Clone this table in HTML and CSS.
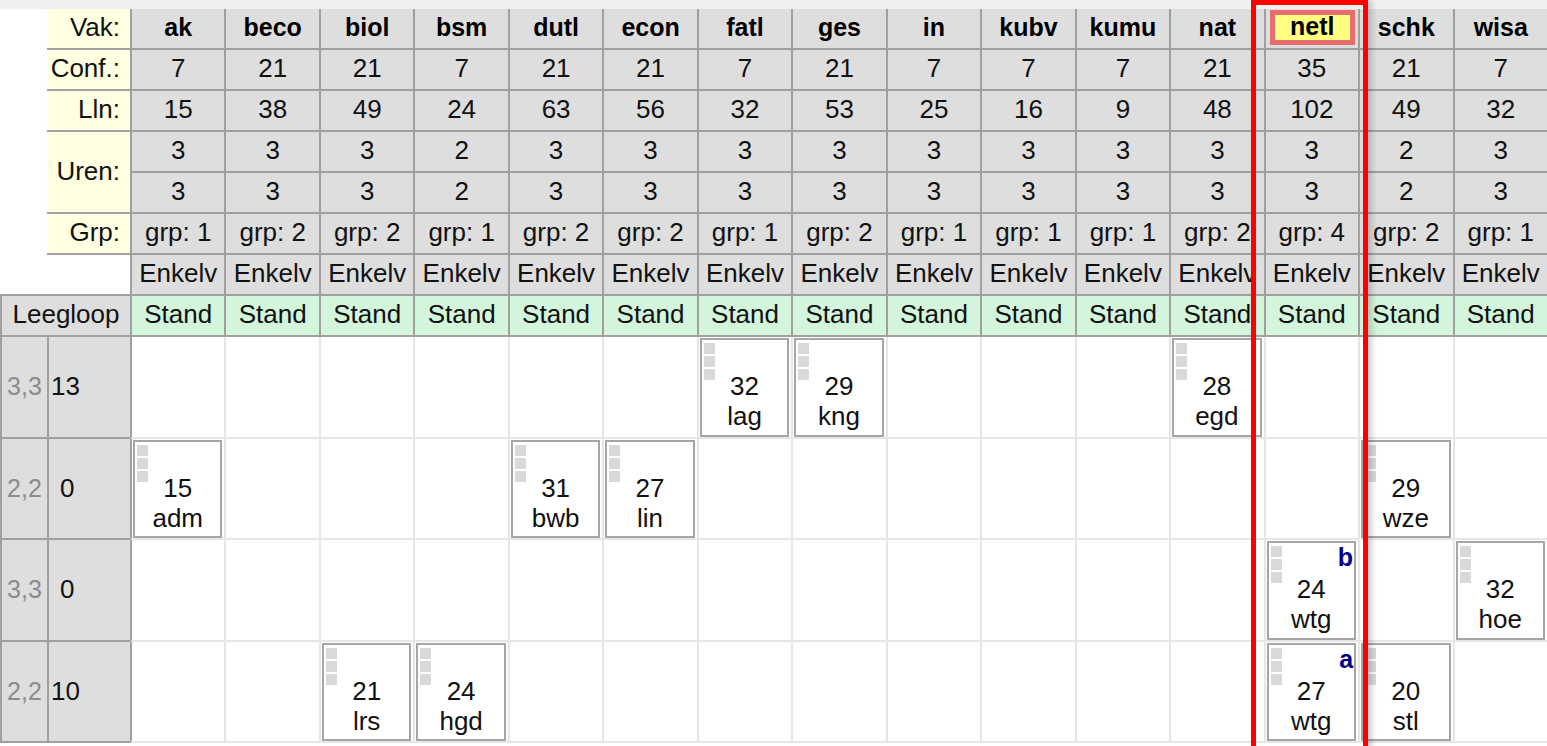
FILE: index.html
```html
<!DOCTYPE html>
<html>
<head>
<meta charset="utf-8">
<title>Vakken</title>
<link rel="stylesheet" href="styles.css">
</head>
<body>
<div class="view">
  <div class="grid">
    <div class="topbar"></div>

    <div class="blank-l"></div>
    <div class="lbl">Vak:</div>
    <div class="h vak first">ak</div><div class="h vak">beco</div><div class="h vak">biol</div><div class="h vak">bsm</div><div class="h vak">dutl</div><div class="h vak">econ</div><div class="h vak">fatl</div><div class="h vak">ges</div><div class="h vak">in</div><div class="h vak">kubv</div><div class="h vak">kumu</div><div class="h vak">nat</div><div class="h vak sel"><span class="sel-box">netl</span></div><div class="h vak">schk</div><div class="h vak">wisa</div>

    <div class="lbl">Conf.:</div>
    <div class="h first">7</div><div class="h">21</div><div class="h">21</div><div class="h">7</div><div class="h">21</div><div class="h">21</div><div class="h">7</div><div class="h">21</div><div class="h">7</div><div class="h">7</div><div class="h">7</div><div class="h">21</div><div class="h">35</div><div class="h">21</div><div class="h">7</div>

    <div class="lbl">Lln:</div>
    <div class="h first">15</div><div class="h">38</div><div class="h">49</div><div class="h">24</div><div class="h">63</div><div class="h">56</div><div class="h">32</div><div class="h">53</div><div class="h">25</div><div class="h">16</div><div class="h">9</div><div class="h">48</div><div class="h">102</div><div class="h">49</div><div class="h">32</div>

    <div class="lbl uren">Uren:</div>
    <div class="h first">3</div><div class="h">3</div><div class="h">3</div><div class="h">2</div><div class="h">3</div><div class="h">3</div><div class="h">3</div><div class="h">3</div><div class="h">3</div><div class="h">3</div><div class="h">3</div><div class="h">3</div><div class="h">3</div><div class="h">2</div><div class="h">3</div>
    <div class="h first">3</div><div class="h">3</div><div class="h">3</div><div class="h">2</div><div class="h">3</div><div class="h">3</div><div class="h">3</div><div class="h">3</div><div class="h">3</div><div class="h">3</div><div class="h">3</div><div class="h">3</div><div class="h">3</div><div class="h">2</div><div class="h">3</div>

    <div class="lbl">Grp:</div>
    <div class="h first">grp: 1</div><div class="h">grp: 2</div><div class="h">grp: 2</div><div class="h">grp: 1</div><div class="h">grp: 2</div><div class="h">grp: 2</div><div class="h">grp: 1</div><div class="h">grp: 2</div><div class="h">grp: 1</div><div class="h">grp: 1</div><div class="h">grp: 1</div><div class="h">grp: 2</div><div class="h">grp: 4</div><div class="h">grp: 2</div><div class="h">grp: 1</div>

    <div class="blank-e"></div>
    <div class="h first">Enkelv</div><div class="h">Enkelv</div><div class="h">Enkelv</div><div class="h">Enkelv</div><div class="h">Enkelv</div><div class="h">Enkelv</div><div class="h">Enkelv</div><div class="h">Enkelv</div><div class="h">Enkelv</div><div class="h">Enkelv</div><div class="h">Enkelv</div><div class="h">Enkelv</div><div class="h">Enkelv</div><div class="h">Enkelv</div><div class="h">Enkelv</div>

    <div class="leeg">Leegloop</div>
    <div class="h st first">Stand</div><div class="h st">Stand</div><div class="h st">Stand</div><div class="h st">Stand</div><div class="h st">Stand</div><div class="h st">Stand</div><div class="h st">Stand</div><div class="h st">Stand</div><div class="h st">Stand</div><div class="h st">Stand</div><div class="h st">Stand</div><div class="h st">Stand</div><div class="h st">Stand</div><div class="h st">Stand</div><div class="h st">Stand</div>

    <!-- body row 1 -->
    <div class="bl pct">3,3</div>
    <div class="bl num">13</div>
    <div class="c first"></div><div class="c"></div><div class="c"></div><div class="c"></div><div class="c"></div><div class="c"></div>
    <div class="c"><div class="card"><span class="sq"><i></i><i></i><i></i></span>32<br>lag</div></div>
    <div class="c"><div class="card"><span class="sq"><i></i><i></i><i></i></span>29<br>kng</div></div>
    <div class="c"></div><div class="c"></div><div class="c"></div>
    <div class="c"><div class="card"><span class="sq"><i></i><i></i><i></i></span>28<br>egd</div></div>
    <div class="c"></div><div class="c"></div><div class="c"></div>

    <!-- body row 2 -->
    <div class="bl pct">2,2</div>
    <div class="bl num ind">0</div>
    <div class="c first"><div class="card"><span class="sq"><i></i><i></i><i></i></span>15<br>adm</div></div>
    <div class="c"></div><div class="c"></div><div class="c"></div>
    <div class="c"><div class="card"><span class="sq"><i></i><i></i><i></i></span>31<br>bwb</div></div>
    <div class="c"><div class="card"><span class="sq"><i></i><i></i><i></i></span>27<br>lin</div></div>
    <div class="c"></div><div class="c"></div><div class="c"></div><div class="c"></div><div class="c"></div><div class="c"></div>
    <div class="c"></div>
    <div class="c"><div class="card"><span class="sq"><i></i><i></i><i></i></span>29<br>wze</div></div>
    <div class="c"></div>

    <!-- body row 3 -->
    <div class="bl pct">3,3</div>
    <div class="bl num ind">0</div>
    <div class="c first"></div><div class="c"></div><div class="c"></div><div class="c"></div><div class="c"></div><div class="c"></div><div class="c"></div><div class="c"></div><div class="c"></div><div class="c"></div><div class="c"></div><div class="c"></div>
    <div class="c"><div class="card"><span class="sq"><i></i><i></i><i></i></span><span class="tag">b</span>24<br>wtg</div></div>
    <div class="c"></div>
    <div class="c"><div class="card"><span class="sq"><i></i><i></i><i></i></span>32<br>hoe</div></div>

    <!-- body row 4 -->
    <div class="bl pct">2,2</div>
    <div class="bl num">10</div>
    <div class="c first"></div><div class="c"></div>
    <div class="c"><div class="card"><span class="sq"><i></i><i></i><i></i></span>21<br>lrs</div></div>
    <div class="c"><div class="card"><span class="sq"><i></i><i></i><i></i></span>24<br>hgd</div></div>
    <div class="c"></div><div class="c"></div><div class="c"></div><div class="c"></div><div class="c"></div><div class="c"></div><div class="c"></div><div class="c"></div>
    <div class="c"><div class="card"><span class="sq"><i></i><i></i><i></i></span><span class="tag">a</span>27<br>wtg</div></div>
    <div class="c"><div class="card"><span class="sq"><i></i><i></i><i></i></span>20<br>stl</div></div>
    <div class="c"></div>
  </div>
  <div class="hl"></div>
</div>
</body>
</html>
```

FILE: styles.css
```css
* { box-sizing: border-box; }
html, body { margin: 0; padding: 0; background: #ffffff; }
body {
  font-family: "Liberation Sans", Arial, sans-serif;
  font-size: 26px;
  color: #111111;
  overflow: hidden;
}
.view {
  position: relative;
  width: 1547px;
  height: 746px;
  overflow: hidden;
}
.grid {
  display: grid;
  grid-template-columns: 47px 83px repeat(15, 1fr);
  grid-template-rows: 9px repeat(8, 41px) repeat(4, 101.5px);
  width: 1547px;
}
.topbar {
  grid-column: 1 / -1;
  background: #f0f0f0;
}
.blank-l { grid-row: span 6; }
.blank-e {
  grid-column: span 2;
  border-bottom: 2px solid #a0a0a0;
}
.lbl {
  background: #ffffe1;
  border-bottom: 2px solid #a0a0a0;
  display: flex;
  align-items: center;
  justify-content: flex-end;
  padding: 0 10px 2px 0;
  white-space: nowrap;
}
.lbl.uren { grid-row: span 2; }
.h {
  background: #dedede;
  border-left: 2px solid #a0a0a0;
  border-bottom: 2px solid #a0a0a0;
  display: flex;
  align-items: center;
  justify-content: center;
  white-space: nowrap;
  overflow: hidden;
  padding-bottom: 2px;
}
.h.vak {
  font-weight: bold;
  font-size: 25px;
  color: #000;
}
.h.st { background: #d2f5dc; }
.h.sel {
  padding: 1px 3px 3px 4px;
  align-items: stretch;
}
.sel-box {
  flex: 1;
  display: flex;
  align-items: center;
  justify-content: center;
  background: #ffff80;
  border: 5px solid #e86e6e;
  padding-bottom: 2px;
}
.leeg {
  grid-column: span 2;
  background: #dedede;
  border-left: 2px solid #a0a0a0;
  border-bottom: 2px solid #a0a0a0;
  display: flex;
  align-items: center;
  justify-content: center;
  padding-bottom: 2px;
}
.bl {
  background: #dedede;
  border-left: 2px solid #a0a0a0;
  border-bottom: 2px solid #a0a0a0;
  display: flex;
  align-items: center;
}
.bl.pct {
  color: #8c8c8c;
  justify-content: center;
  font-size: 25px;
}
.bl.num { padding-left: 2px; }
.bl.ind { padding-left: 11px; }
.c {
  background: #ffffff;
  border-left: 2px solid #e6e6e6;
  border-bottom: 2px solid #e6e6e6;
  padding: 1px 2px 0 1px;
}
.c.first { border-left-color: #a0a0a0; }
.card {
  position: relative;
  height: 100%;
  border: 2px solid #a6a6a6;
  background: #ffffff;
  text-align: center;
  padding-top: 31px;
  line-height: 30px;
}
.sq {
  position: absolute;
  left: 2px;
  top: 3px;
  width: 11px;
  display: flex;
  flex-direction: column;
  gap: 2px;
}
.sq i {
  display: block;
  height: 11px;
  background: #d9d9d9;
}
.tag {
  position: absolute;
  right: 1px;
  top: 1px;
  font-weight: bold;
  color: #00008c;
  font-size: 25px;
  line-height: 26px;
}
.hl {
  position: absolute;
  left: 1251px;
  top: 0;
  width: 117px;
  height: 760px;
  border: 5px solid #ff0000;
  box-shadow: 4px 0 6px rgba(0, 0, 0, 0.18);
  pointer-events: none;
}
```
